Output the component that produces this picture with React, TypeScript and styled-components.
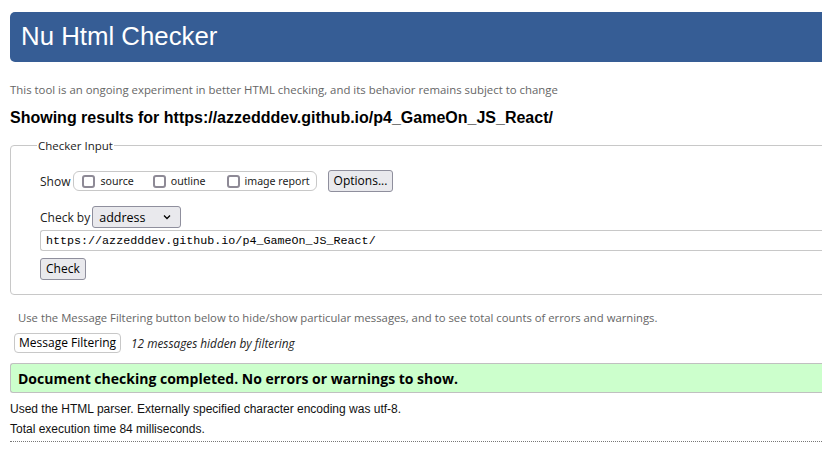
import React from "react";
import styled, { createGlobalStyle } from "styled-components";

const Global = createGlobalStyle`
  html, body { margin: 0; padding: 0; background: #fff; overflow: hidden; }
  body { font-family: "Liberation Sans", Arial, sans-serif; color: #000; }
`;

const Page = styled.div`
  width: 860px;
  padding: 12px 0 0 10px;
  box-sizing: border-box;
`;

const Header = styled.h1`
  margin: 0;
  height: 50px;
  box-sizing: border-box;
  background: #365d95;
  border-radius: 5px;
  color: #fff;
  font-family: "Liberation Sans", Arial, sans-serif;
  font-weight: normal;
  font-size: 25.8px;
  line-height: 49px;
  padding-left: 11px;
`;

const About = styled.p`
  margin: 20px 0 0 0;
  font-family: "Open Sans", sans-serif;
  font-size: 11.4px;
  line-height: 15px;
  color: #666;
`;

const Results = styled.h2`
  margin: 11px 0 0 0;
  font-family: "Liberation Sans", Arial, sans-serif;
  font-size: 16px;
  font-weight: bold;
  line-height: 20px;
`;

const Fieldset = styled.fieldset`
  margin: 10px 0 0 0;
  padding: 10px 0 14px 29px;
  border: 1px solid #c8c8c8;
  border-radius: 4px;
  font-family: "Open Sans", sans-serif;
  font-size: 11.5px;
`;

const Legend = styled.legend`
  margin-left: -3px;
  padding: 0 1px;
  font-size: 11.5px;
  color: #222;
`;

const Row = styled.div<{ $mt?: number }>`
  display: flex;
  align-items: center;
  margin-top: ${(p) => p.$mt ?? 0}px;
`;

const Label = styled.span`
  font-size: 12px;
  color: #222;
  margin-right: 2px;
`;

const Group = styled.div`
  display: flex;
  align-items: center;
  height: 18px;
  border: 1px solid #c8c8c8;
  border-radius: 6px;
  padding: 0 6px 0 8px;
  margin-left: 1px;
  margin-right: 11px;
`;

const CheckLabel = styled.label<{ $gap: number }>`
  display: flex;
  align-items: center;
  font-family: "Noto Sans", "Open Sans", sans-serif;
  font-size: 10.6px;
  color: #222;
  margin-right: ${(p) => p.$gap}px;
`;

const Box = styled.span`
  width: 9px;
  height: 9px;
  border: 2px solid #8e8a96;
  border-radius: 3px;
  margin-right: 5px;
  box-sizing: content-box;
`;

const Button = styled.button`
  font-family: "Open Sans", sans-serif;
  font-size: 12px;
  color: #000;
  background: #e9e9ed;
  border: 1px solid #8f8f9d;
  border-radius: 3px;
  padding: 0 5px;
  height: 22px;
  line-height: 20px;
`;

const Select = styled.div`
  display: flex;
  align-items: center;
  justify-content: space-between;
  width: 89px;
  height: 22px;
  box-sizing: border-box;
  background: #e9e9ed;
  border: 1px solid #8f8f9d;
  border-radius: 3px;
  padding: 0 9px 0 6px;
  font-family: "Open Sans", sans-serif;
  font-size: 12.5px;
  color: #000;
`;

const UrlInput = styled.div`
  margin-top: 2px;
  height: 21px;
  box-sizing: border-box;
  border: 1px solid #c8c8c8;
  border-right: none;
  border-radius: 3px 0 0 3px;
  padding-left: 5px;
  display: flex;
  align-items: center;
  font-family: "Liberation Mono", "DejaVu Sans Mono", monospace;
  font-size: 11.7px;
  color: #000;
`;

const Intro = styled.p`
  margin: 15px 0 0 8px;
  font-family: "Open Sans", sans-serif;
  font-size: 11.3px;
  line-height: 15px;
  color: #666;
`;

const FilterRow = styled.div`
  display: flex;
  align-items: center;
  margin: 8px 0 0 4px;
`;

const FilterButton = styled.button`
  font-family: "Open Sans", sans-serif;
  font-size: 12px;
  color: #000;
  background: #fff;
  border: 1px solid #c8c8c8;
  border-radius: 4px;
  padding: 0 4px;
  height: 20px;
  line-height: 18px;
  margin-right: 10px;
`;

const Hidden = styled.em`
  font-family: "Open Sans", sans-serif;
  font-size: 11.8px;
  color: #222;
`;

const Success = styled.div`
  margin-top: 10px;
  height: 30px;
  box-sizing: border-box;
  background: #ccffcc;
  border: 1px solid #c0c0c0;
  border-right: none;
  border-radius: 3px 0 0 3px;
  padding-left: 7px;
  display: flex;
  align-items: center;
  font-family: "Open Sans", sans-serif;
  font-weight: bold;
  font-size: 14px;
  color: #000;
`;

const Info = styled.p<{ $mt: number }>`
  margin: ${(p) => p.$mt}px 0 0 0;
  font-family: "Liberation Sans", Arial, sans-serif;
  font-size: 12px;
  line-height: 14px;
  color: #111;
`;

const Rule = styled.hr`
  margin: 5px 0 0 0;
  border: none;
  border-top: 1px dotted #777;
`;

const Chevron = () => (
  <svg width="8" height="6" viewBox="0 0 8 6">
    <path d="M1 1.5 L4 4.5 L7 1.5" fill="none" stroke="#000" strokeWidth="1.3" />
  </svg>
);

export default function App() {
  return (
    <>
      <Global />
      <Page>
        <Header>Nu Html Checker</Header>
        <About>
          This tool is an ongoing experiment in better HTML checking, and its behavior remains subject to change
        </About>
        <Results>Showing results for https://azzedddev.github.io/p4_GameOn_JS_React/</Results>
        <Fieldset>
          <Legend>Checker Input</Legend>
          <Row $mt={7}>
            <Label>Show</Label>
            <Group>
              <CheckLabel $gap={19}><Box />source</CheckLabel>
              <CheckLabel $gap={21}><Box />outline</CheckLabel>
              <CheckLabel $gap={0}><Box />image report</CheckLabel>
            </Group>
            <Button>Options...</Button>
          </Row>
          <Row $mt={14}>
            <Label>Check by</Label>
            <Select>address<Chevron /></Select>
          </Row>
          <UrlInput>https://azzedddev.github.io/p4_GameOn_JS_React/</UrlInput>
          <Row $mt={7}>
            <Button>Check</Button>
          </Row>
        </Fieldset>
        <Intro>
          Use the Message Filtering button below to hide/show particular messages, and to see total counts of errors and warnings.
        </Intro>
        <FilterRow>
          <FilterButton>Message Filtering</FilterButton>
          <Hidden>12 messages hidden by filtering</Hidden>
        </FilterRow>
        <Success>Document checking completed. No errors or warnings to show.</Success>
        <Info $mt={9}>Used the HTML parser. Externally specified character encoding was utf-8.</Info>
        <Info $mt={6}>Total execution time 84 milliseconds.</Info>
        <Rule />
      </Page>
    </>
  );
}
